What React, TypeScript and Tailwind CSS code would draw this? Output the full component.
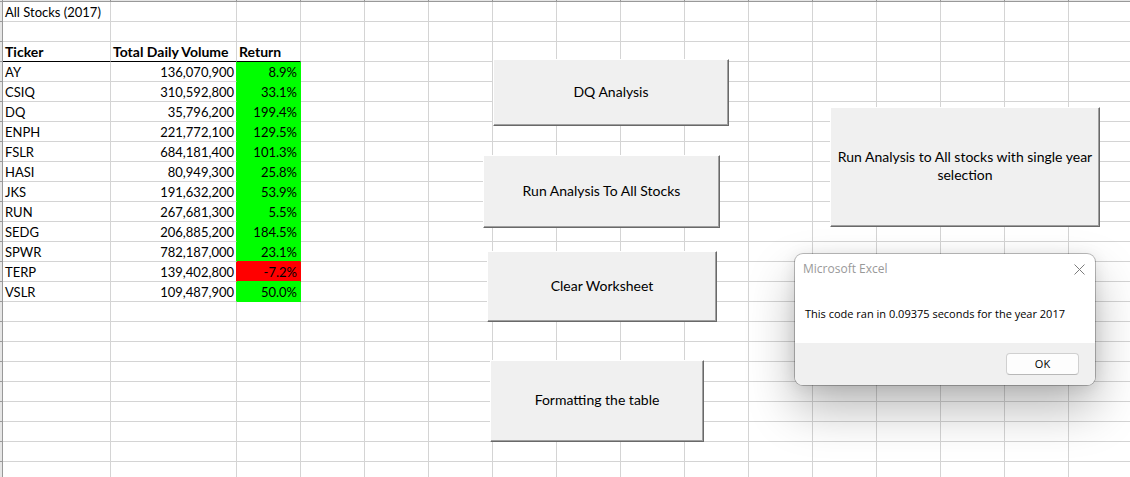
import { useState } from "react";

type Stock = { ticker: string; volume: string; change: number };

const stocks: Stock[] = [
  { ticker: "AY", volume: "136,070,900", change: 8.9 },
  { ticker: "CSIQ", volume: "310,592,800", change: 33.1 },
  { ticker: "DQ", volume: "35,796,200", change: 199.4 },
  { ticker: "ENPH", volume: "221,772,100", change: 129.5 },
  { ticker: "FSLR", volume: "684,181,400", change: 101.3 },
  { ticker: "HASI", volume: "80,949,300", change: 25.8 },
  { ticker: "JKS", volume: "191,632,200", change: 53.9 },
  { ticker: "RUN", volume: "267,681,300", change: 5.5 },
  { ticker: "SEDG", volume: "206,885,200", change: 184.5 },
  { ticker: "SPWR", volume: "782,187,000", change: 23.1 },
  { ticker: "TERP", volume: "139,402,800", change: -7.2 },
  { ticker: "VSLR", volume: "109,487,900", change: 50.0 },
];

const headings = ["Ticker", "Total Daily Volume", "Return"];
const spareColumns = Array.from({ length: 28 }, (_, i) => i);
const spareRows = Array.from({ length: 32 }, (_, i) => i);

const line = "border-r border-b border-[#d4d4d4]";

function Gutter() {
  return <td className="h-5 border-r border-b border-[#999999] bg-[#e6e6e6] p-0" />;
}

function Spare() {
  return (
    <>
      {spareColumns.map((c) => (
        <td key={c} className={`p-0 ${line}`} />
      ))}
    </>
  );
}

function BlankRow({ title }: { title?: string }) {
  return (
    <tr className="h-5">
      <Gutter />
      <td className={`px-0.5 py-0 ${line}`}>{title}</td>
      <td className={`p-0 ${line}`} />
      <td className={`p-0 ${line}`} />
      <Spare />
    </tr>
  );
}

function StockRow({ stock, next }: { stock: Stock; next?: Stock }) {
  const up = stock.change >= 0;
  const nextUp = !next || next.change >= 0;
  return (
    <tr className="h-5">
      <Gutter />
      <td className={`px-0.5 py-0 ${line}`}>{stock.ticker}</td>
      <td
        className={`border-r border-b border-b-[#d4d4d4] px-0.5 py-0 text-right ${
          up ? "border-r-[#00ff00]" : "border-r-[#ff0000]"
        }`}
      >
        {stock.volume}
      </td>
      <td
        className={`border-r border-b py-0 pr-[3px] pl-0 text-right ${
          up ? "border-r-[#00ff00] bg-[#00ff00]" : "border-r-[#ff0000] bg-[#ff0000]"
        } ${nextUp ? "border-b-[#00ff00]" : "border-b-[#ff0000]"}`}
      >
        {stock.change.toFixed(1)}%
      </td>
      <Spare />
    </tr>
  );
}

function Sheet() {
  return (
    <table className="w-px table-fixed border-separate border-spacing-0 text-left text-[13px] leading-[18px] whitespace-nowrap">
      <colgroup>
        <col className="w-[3px]" />
        <col className="w-[108px]" />
        <col className="w-[126px]" />
        <col className="w-16" />
        {spareColumns.map((c) => (
          <col key={c} className="w-16" />
        ))}
      </colgroup>
      <tbody>
        <tr>
          <td className="h-0.5 border-r border-b border-[#999999] bg-[#e6e6e6] p-0" />
          {[0, 1, 2, ...spareColumns.map((c) => c + 3)].map((c) => (
            <td key={c} className="h-0.5 border-r border-b border-[#999999] bg-[#e6e6e6] p-0" />
          ))}
        </tr>
        <BlankRow title="All Stocks (2017)" />
        <BlankRow />
        <tr className="h-5">
          <Gutter />
          {headings.map((heading) => (
            <th
              key={heading}
              scope="col"
              className="border-r border-b border-r-[#d4d4d4] border-b-black px-0.5 py-0 text-sm leading-[18px] font-bold"
            >
              {heading}
            </th>
          ))}
          <Spare />
        </tr>
        {stocks.map((s, i) => (
          <StockRow key={s.ticker} stock={s} next={stocks[i + 1]} />
        ))}
        {spareRows.map((r) => (
          <BlankRow key={r} />
        ))}
      </tbody>
    </table>
  );
}

function MacroButton({ label, place }: { label: string; place: string }) {
  return (
    <button
      type="button"
      className={`absolute border border-t-white border-r-[#696969] border-b-[#696969] border-l-white bg-[#f0f0f0] px-1 pb-0.5 text-center text-sm leading-[18px] text-black shadow-[inset_-1px_-1px_0_#a0a0a0] ${place}`}
    >
      {label}
    </button>
  );
}

function MessageBox({ onClose }: { onClose: () => void }) {
  return (
    <div
      role="dialog"
      aria-labelledby="message-title"
      className="absolute top-[254px] left-[795px] w-[300px] overflow-hidden rounded-lg bg-white font-['Open_Sans',sans-serif] text-[11px] leading-4 text-black shadow-[0_0_0_1px_rgba(0,0,0,0.25),0_2px_16px_rgba(0,0,0,0.1),0_24px_48px_rgba(0,0,0,0.28)]"
    >
      <div className="flex h-7 items-center justify-between px-2 pt-0.5">
        <h2 id="message-title" className="text-xs text-[#999999]">
          Microsoft Excel
        </h2>
        <button type="button" aria-label="Close" onClick={onClose} className="pr-0.5">
          <svg width="11" height="11" viewBox="0 0 11 11" fill="none" stroke="#7c7c7c" strokeWidth="1">
            <path d="M0.5 0.5 L10.5 10.5 M10.5 0.5 L0.5 10.5" />
          </svg>
        </button>
      </div>
      <p className="px-2.5 pt-6 pb-[21px]">This code ran in 0.09375 seconds for the year 2017</p>
      <div className="flex justify-end bg-[#f0f0f0] px-4 py-2.5">
        <button
          type="button"
          onClick={onClose}
          className="h-[22px] w-[73px] rounded-sm border border-[#d0d0d0] border-b-[#b8b8b8] bg-[#fdfdfd]"
        >
          OK
        </button>
      </div>
    </div>
  );
}

export default function App() {
  const [open, setOpen] = useState(true);
  return (
    <main className="relative h-screen overflow-hidden bg-white font-[Lato,sans-serif] text-black">
      <Sheet />
      <MacroButton label="DQ Analysis" place="left-[493px] top-[59px] w-[236px] h-[67px]" />
      <MacroButton label="Run Analysis To All Stocks" place="left-[483px] top-[155px] w-[237px] h-[73px]" />
      <MacroButton label="Clear Worksheet" place="left-[487px] top-[251px] w-[230px] h-[71px]" />
      <MacroButton label="Formatting the table" place="left-[490px] top-[360px] w-[214px] h-[82px]" />
      <MacroButton
        label="Run Analysis to All stocks with single year selection"
        place="left-[830px] top-[107px] w-[270px] h-[120px]"
      />
      {open && <MessageBox onClose={() => setOpen(false)} />}
    </main>
  );
}
